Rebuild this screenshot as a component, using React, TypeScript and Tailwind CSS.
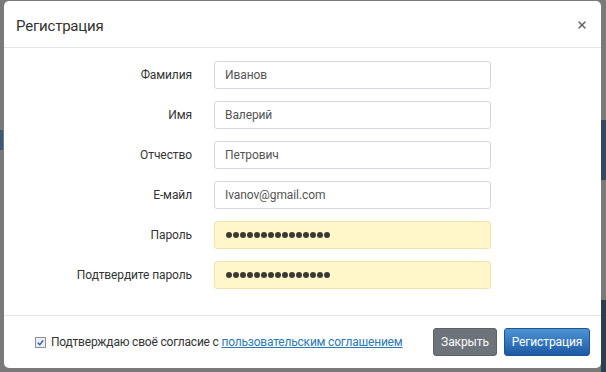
import { X } from "lucide-react";

const font = { fontFamily: 'Roboto, "Noto Sans", sans-serif' };

const fields = [
  { label: "Фамилия", value: "Иванов" },
  { label: "Имя", value: "Валерий" },
  { label: "Отчество", value: "Петрович" },
  { label: "Е-майл", value: "Ivanov@gmail.com" },
  { label: "Пароль", value: "", password: true },
  { label: "Подтвердите пароль", value: "", password: true },
];

function Field({ label, value, password }: { label: string; value: string; password?: boolean }) {
  return (
    <div className="flex h-[28px] items-center">
      <div className="w-[189px] pr-[1px] text-right text-[12px] tracking-[-0.1px] text-[#333]">{label}</div>
      <div
        className={`ml-[21px] flex h-[28px] w-[277px] items-center rounded-[3px] border px-[10px] text-[12px] tracking-[-0.1px] ${
          password ? "border-[#ece3b0] bg-[#fff7c9]" : "border-[#d5d8dc] bg-white text-[#555]"
        }`}
      >
        {password ? (
          <span className="flex gap-[1px] pl-[1px]">
            {Array.from({ length: 15 }).map((_, i) => (
              <span key={i} className="h-[6px] w-[6px] rounded-full bg-[#3a3a33]" />
            ))}
          </span>
        ) : (
          value
        )}
      </div>
    </div>
  );
}

export default function App() {
  return (
    <div className="relative h-[372px] w-[606px] overflow-hidden bg-[#7a7a7a]" style={font}>
      {/* bits of the page behind the overlay */}
      <div className="absolute right-0 top-[120px] h-[60px] w-[5px] bg-[#34495e]" />
      <div className="absolute right-0 top-[300px] h-[72px] w-[5px] bg-[#2c3e50]" />
      <div className="absolute left-0 top-[130px] h-[20px] w-[3px] bg-[#3c5a78]" />

      <div className="absolute left-[4px] top-[1px] flex h-[367px] w-[597px] flex-col rounded-[5px] bg-white">
        {/* Header */}
        <div className="flex h-[47px] shrink-0 items-center justify-between border-b border-[#e5e5e5] pl-[12px] pr-[13px] pt-[4px]">
          <span className="text-[15px] tracking-[-0.2px] text-[#333]">Регистрация</span>
          <X className="-mt-[3px] h-[12px] w-[12px] text-[#666]" strokeWidth={3} />
        </div>

        {/* Body */}
        <div className="flex flex-col gap-[12px] pb-[26px] pt-[13px]">
          {fields.map((f) => (
            <Field key={f.label} {...f} />
          ))}
        </div>

        {/* Footer */}
        <div className="flex flex-1 items-center border-t border-[#e5e5e5] pl-[31px] pr-[11px]">
          <span className="flex h-[11px] w-[11px] shrink-0 items-center justify-center border border-[#8f8f9d] bg-[#e8eef7]">
            <svg viewBox="0 0 10 10" className="h-[9px] w-[9px]">
              <path d="M2 5.2 L4.2 7.4 L8 2.6" fill="none" stroke="#3b5aa0" strokeWidth="1.6" />
            </svg>
          </span>
          <span className="ml-[5px] whitespace-nowrap text-[12px] tracking-[-0.2px] text-[#333]">
            Подтверждаю своё согласие с{" "}
            <span className="text-[#2a7ab8] underline">пользовательским соглашением</span>
          </span>
          <div className="ml-auto flex shrink-0 gap-[7px]">
            <button className="h-[28px] w-[64px] rounded-[3px] border border-[#5b6168] bg-[#6c737b] text-[12px] tracking-[-0.1px] text-white">
              Закрыть
            </button>
            <button className="h-[28px] w-[86px] rounded-[3px] border border-[#1d5595] bg-gradient-to-b from-[#4d94d6] to-[#1c5aa3] text-[12px] tracking-[-0.1px] text-white">
              Регистрация
            </button>
          </div>
        </div>
      </div>
    </div>
  );
}
